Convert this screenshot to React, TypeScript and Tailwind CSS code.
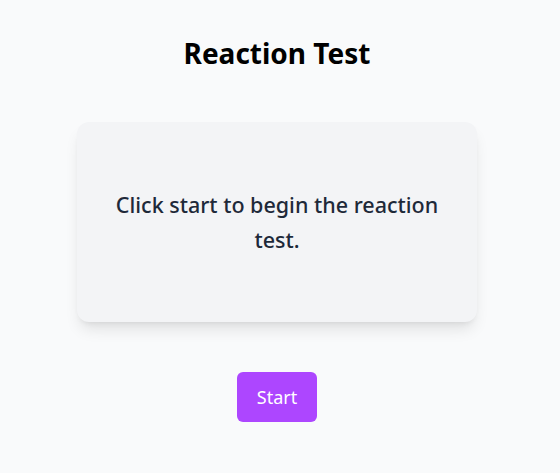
import React, { useState } from "react";

export default function App() {
  const [status, setStatus] = useState("Click start to begin the reaction test.");

  return (
    <div className="min-h-screen bg-gray-50 flex flex-col items-center pt-[35px] pr-[6px] font-['Noto_Sans',sans-serif]">
      <h1 className="text-[28px] leading-[36px] font-bold text-black">Reaction Test</h1>

      <div className="mt-[51px] w-[400px] h-[200px] bg-gray-100 rounded-xl shadow-lg flex items-center justify-center px-8">
        <p className="text-[21.5px] leading-[35px] font-medium text-gray-800 text-center">{status}</p>
      </div>

      <button
        onClick={() => setStatus("Wait for it...")}
        className="mt-[50px] w-[80px] h-[50px] bg-purple-500 text-white text-[18px] rounded-md"
      >
        Start
      </button>
    </div>
  );
}
